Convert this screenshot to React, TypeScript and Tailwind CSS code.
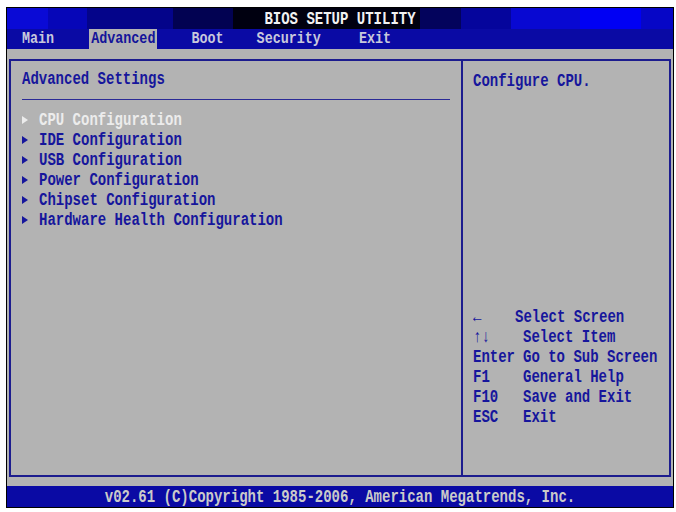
import React from 'react';

const items = [
  'CPU Configuration',
  'IDE Configuration',
  'USB Configuration',
  'Power Configuration',
  'Chipset Configuration',
  'Hardware Health Configuration',
];

const keys = [
  { k: '←', d: 'Select Screen', w: 'w-[42px]' },
  { k: '↑↓', d: 'Select Item', w: 'w-[50px]' },
  { k: 'Enter', d: 'Go to Sub Screen', w: 'w-[50px]' },
  { k: 'F1', d: 'General Help', w: 'w-[50px]' },
  { k: 'F10', d: 'Save and Exit', w: 'w-[50px]' },
  { k: 'ESC', d: 'Exit', w: 'w-[50px]' },
];

function Arrow() {
  return (
    <svg width="6" height="8" viewBox="0 0 6 8" className="shrink-0">
      <polygon points="0,0 6,4 0,8" fill="currentColor" />
    </svg>
  );
}

export default function App() {
  return (
    <div className="h-[512px] w-[676px] bg-white pl-[6px] pt-[7px]">
      <div className="flex h-[501px] w-[668px] flex-col border border-black bg-[#b3b3b3] font-['Liberation_Mono',monospace] text-[14px] font-bold leading-none">
        {/* title bar */}
        <div className="flex h-[21px] items-center justify-center bg-[linear-gradient(90deg,#0a0ad6_0_41px,#0606b8_41px_80px,#04048a_80px_166px,#020252_166px_226px,#000010_226px_413px,#03035c_413px_454px,#05059c_454px_504px,#0808d2_504px_573px,#0000f4_573px_634px,#0606c6_634px)] text-[#f2f2f2]">
          <span className="inline-block scale-y-125">BIOS SETUP UTILITY</span>
        </div>

        {/* tabs */}
        <div className="flex h-[20px] items-stretch bg-[#0a0aa4] text-[13.4px] text-[#c8c8dc]">
          <span className="ml-[15px] flex items-center">
            <span className="inline-block scale-y-125">Main</span>
          </span>
          <span className="ml-[35px] flex items-center bg-[#b3b3b3] px-[2px] text-[#14149a]">
            <span className="inline-block scale-y-125">Advanced</span>
          </span>
          <span className="ml-[34px] flex items-center">
            <span className="inline-block scale-y-125">Boot</span>
          </span>
          <span className="ml-[33px] flex items-center">
            <span className="inline-block scale-y-125">Security</span>
          </span>
          <span className="ml-[38px] flex items-center">
            <span className="inline-block scale-y-125">Exit</span>
          </span>
        </div>

        {/* body */}
        <div className="flex-1 px-[2px] pb-[9px] pt-[10px]">
          <div className="flex h-full border-2 border-[#1c1c8e] text-[#16169c]">
            <div className="w-[450px] pl-[11px] pr-[11px] pt-[8px]">
              <div className="flex h-[20px] items-center">
                <span className="inline-block scale-y-125">Advanced Settings</span>
              </div>
              <div className="mt-[10px] h-px bg-[#2a2a96]" />
              <div className="mt-[10px]">
                {items.map((item, i) => (
                  <div
                    key={item}
                    className={`flex h-[20px] items-center gap-[11px] ${i === 0 ? 'text-[#ececec]' : ''}`}
                  >
                    <Arrow />
                    <span className="inline-block scale-y-125">{item}</span>
                  </div>
                ))}
              </div>
            </div>

            <div className="flex flex-1 flex-col border-l-2 border-[#1c1c8e] pl-[10px] pt-[10px]">
              <div className="flex h-[20px] items-center">
                <span className="inline-block scale-y-125">Configure CPU.</span>
              </div>
              <div className="mb-[48px] mt-auto">
                {keys.map((row) => (
                  <div key={row.k} className="flex h-[20px] items-center">
                    <span className={`inline-block shrink-0 scale-y-125 ${row.w}`}>{row.k}</span>
                    <span className="inline-block scale-y-125">{row.d}</span>
                  </div>
                ))}
              </div>
            </div>
          </div>
        </div>

        {/* footer */}
        <div className="flex h-[21px] items-center justify-center bg-[#0a0aa4] text-[#cacaca]">
          <span className="inline-block scale-y-125">v02.61 (C)Copyright 1985-2006, American Megatrends, Inc.</span>
        </div>
      </div>
    </div>
  );
}
